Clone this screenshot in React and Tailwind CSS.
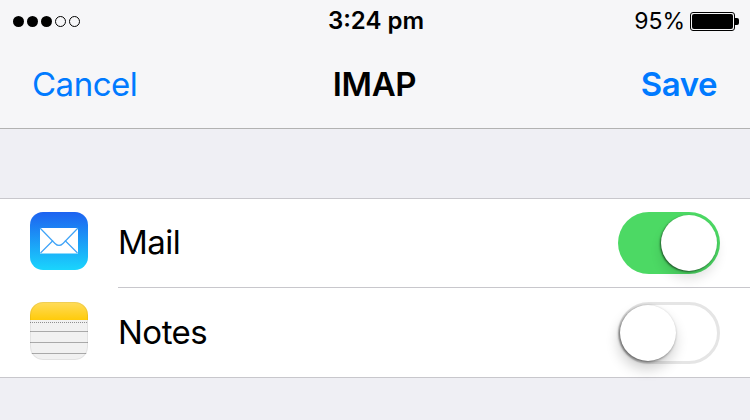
import React from 'react';

const font = { fontFamily: 'Inter, "Liberation Sans", sans-serif' };

function Toggle({ on }) {
  return (
    <div
      className={`flex h-[62px] w-[102px] items-center rounded-full ${
        on ? 'justify-end bg-[#4cd964] pr-[3px]' : 'justify-start border-[3px] border-[#e5e5e5] bg-white'
      }`}
    >
      <div
        className={`h-[56px] w-[56px] rounded-full bg-white ${
          on
            ? 'shadow-[0_8px_12px_rgba(0,0,0,0.12),-1px_1px_2px_rgba(0,0,0,0.55)]'
            : '-ml-px shadow-[-1px_8px_14px_rgba(0,0,0,0.2),-1px_1px_3px_rgba(0,0,0,0.55)]'
        }`}
      />
    </div>
  );
}

function MailIcon() {
  return (
    <svg width="58" height="58" viewBox="0 0 58 58" className="mb-[4px] shrink-0">
      <defs>
        <linearGradient id="mailBg" x1="0" y1="0" x2="0" y2="1">
          <stop offset="0" stopColor="#1d62f0" />
          <stop offset="1" stopColor="#1ad5fd" />
        </linearGradient>
      </defs>
      <rect width="58" height="58" rx="13" fill="url(#mailBg)" />
      <rect x="10" y="16" width="38" height="25.5" fill="#fff" />
      <path d="M10 16 L25 31.5 Q29 35.5 33 31.5 L48 16" fill="none" stroke="#3fa4f8" strokeWidth="1.2" />
      <path d="M10.5 41 L23 28.5 M47.5 41 L35 28.5" fill="none" stroke="#3fa4f8" strokeWidth="1.2" />
    </svg>
  );
}

function NotesIcon() {
  return (
    <svg width="58" height="58" viewBox="0 0 58 58" className="mb-[3px] shrink-0">
      <defs>
        <linearGradient id="notesTop" x1="0" y1="0" x2="0" y2="1">
          <stop offset="0" stopColor="#ffdc5c" />
          <stop offset="1" stopColor="#ffcb0a" />
        </linearGradient>
        <clipPath id="notesClip">
          <rect width="58" height="58" rx="13" />
        </clipPath>
      </defs>
      <g clipPath="url(#notesClip)">
        <rect width="58" height="58" fill="#f1f1f1" />
        <rect width="58" height="18" fill="url(#notesTop)" />
        <path d="M0 20.5 H58" stroke="#8f8f8f" strokeWidth="1" strokeDasharray="1 1" />
        <path d="M0 29.5 H58 M0 40.5 H58 M0 51.5 H58" stroke="#a9a9a9" strokeWidth="1" />
      </g>
      <rect x="0.5" y="0.5" width="57" height="57" rx="12.5" fill="none" stroke="#000" strokeOpacity="0.06" />
    </svg>
  );
}

function Row({ icon, label, on, height }) {
  return (
    <div className={`flex items-center px-[30px] ${height}`}>
      {icon}
      <div className="ml-[30px] text-[33px] tracking-[-0.5px] text-black">{label}</div>
      <div className="ml-auto">
        <Toggle on={on} />
      </div>
    </div>
  );
}

export default function App() {
  return (
    <div className="flex h-[420px] w-[750px] flex-col overflow-hidden bg-[#efeff4]" style={font}>
      <div className="h-[129px] border-b border-[#b2b2b2] bg-[#f6f6f8]">
        <div className="flex h-[42px] items-center justify-between pl-[13px] pr-[11px]">
          <div className="flex w-[200px] items-center gap-[3px]">
            <div className="h-[11px] w-[11px] rounded-full bg-black" />
            <div className="h-[11px] w-[11px] rounded-full bg-black" />
            <div className="h-[11px] w-[11px] rounded-full bg-black" />
            <div className="h-[11px] w-[11px] rounded-full border border-black" />
            <div className="h-[11px] w-[11px] rounded-full border border-black" />
          </div>
          <div className="text-[24px] font-semibold text-black">3:24 pm</div>
          <div className="flex w-[200px] items-center justify-end">
            <span className="text-[23px] text-black">95%</span>
            <div className="ml-[5px] flex h-[19px] w-[45px] items-center rounded-[3px] border border-black p-[1px]">
              <div className="h-full w-full rounded-[2px] bg-black" />
            </div>
            <div className="h-[7px] w-[4px] rounded-r-[2px] bg-black" />
          </div>
        </div>
        <div className="flex h-[86px] items-center justify-between pl-[32px] pr-[33px]">
          <div className="w-[200px] text-[33px] tracking-[-0.5px] text-[#007aff]">Cancel</div>
          <div className="text-[33px] font-semibold tracking-[-0.4px] text-black">IMAP</div>
          <div className="w-[200px] text-right text-[33px] font-semibold tracking-[-0.5px] text-[#007aff]">Save</div>
        </div>
      </div>
      <div className="mt-[69px] border-y border-[#c8c7cc] bg-white">
        <Row icon={<MailIcon />} label="Mail" on height="h-[88px]" />
        <div className="ml-[118px] h-px bg-[#c8c7cc]" />
        <Row icon={<NotesIcon />} label="Notes" on={false} height="h-[89px]" />
      </div>
    </div>
  );
}
